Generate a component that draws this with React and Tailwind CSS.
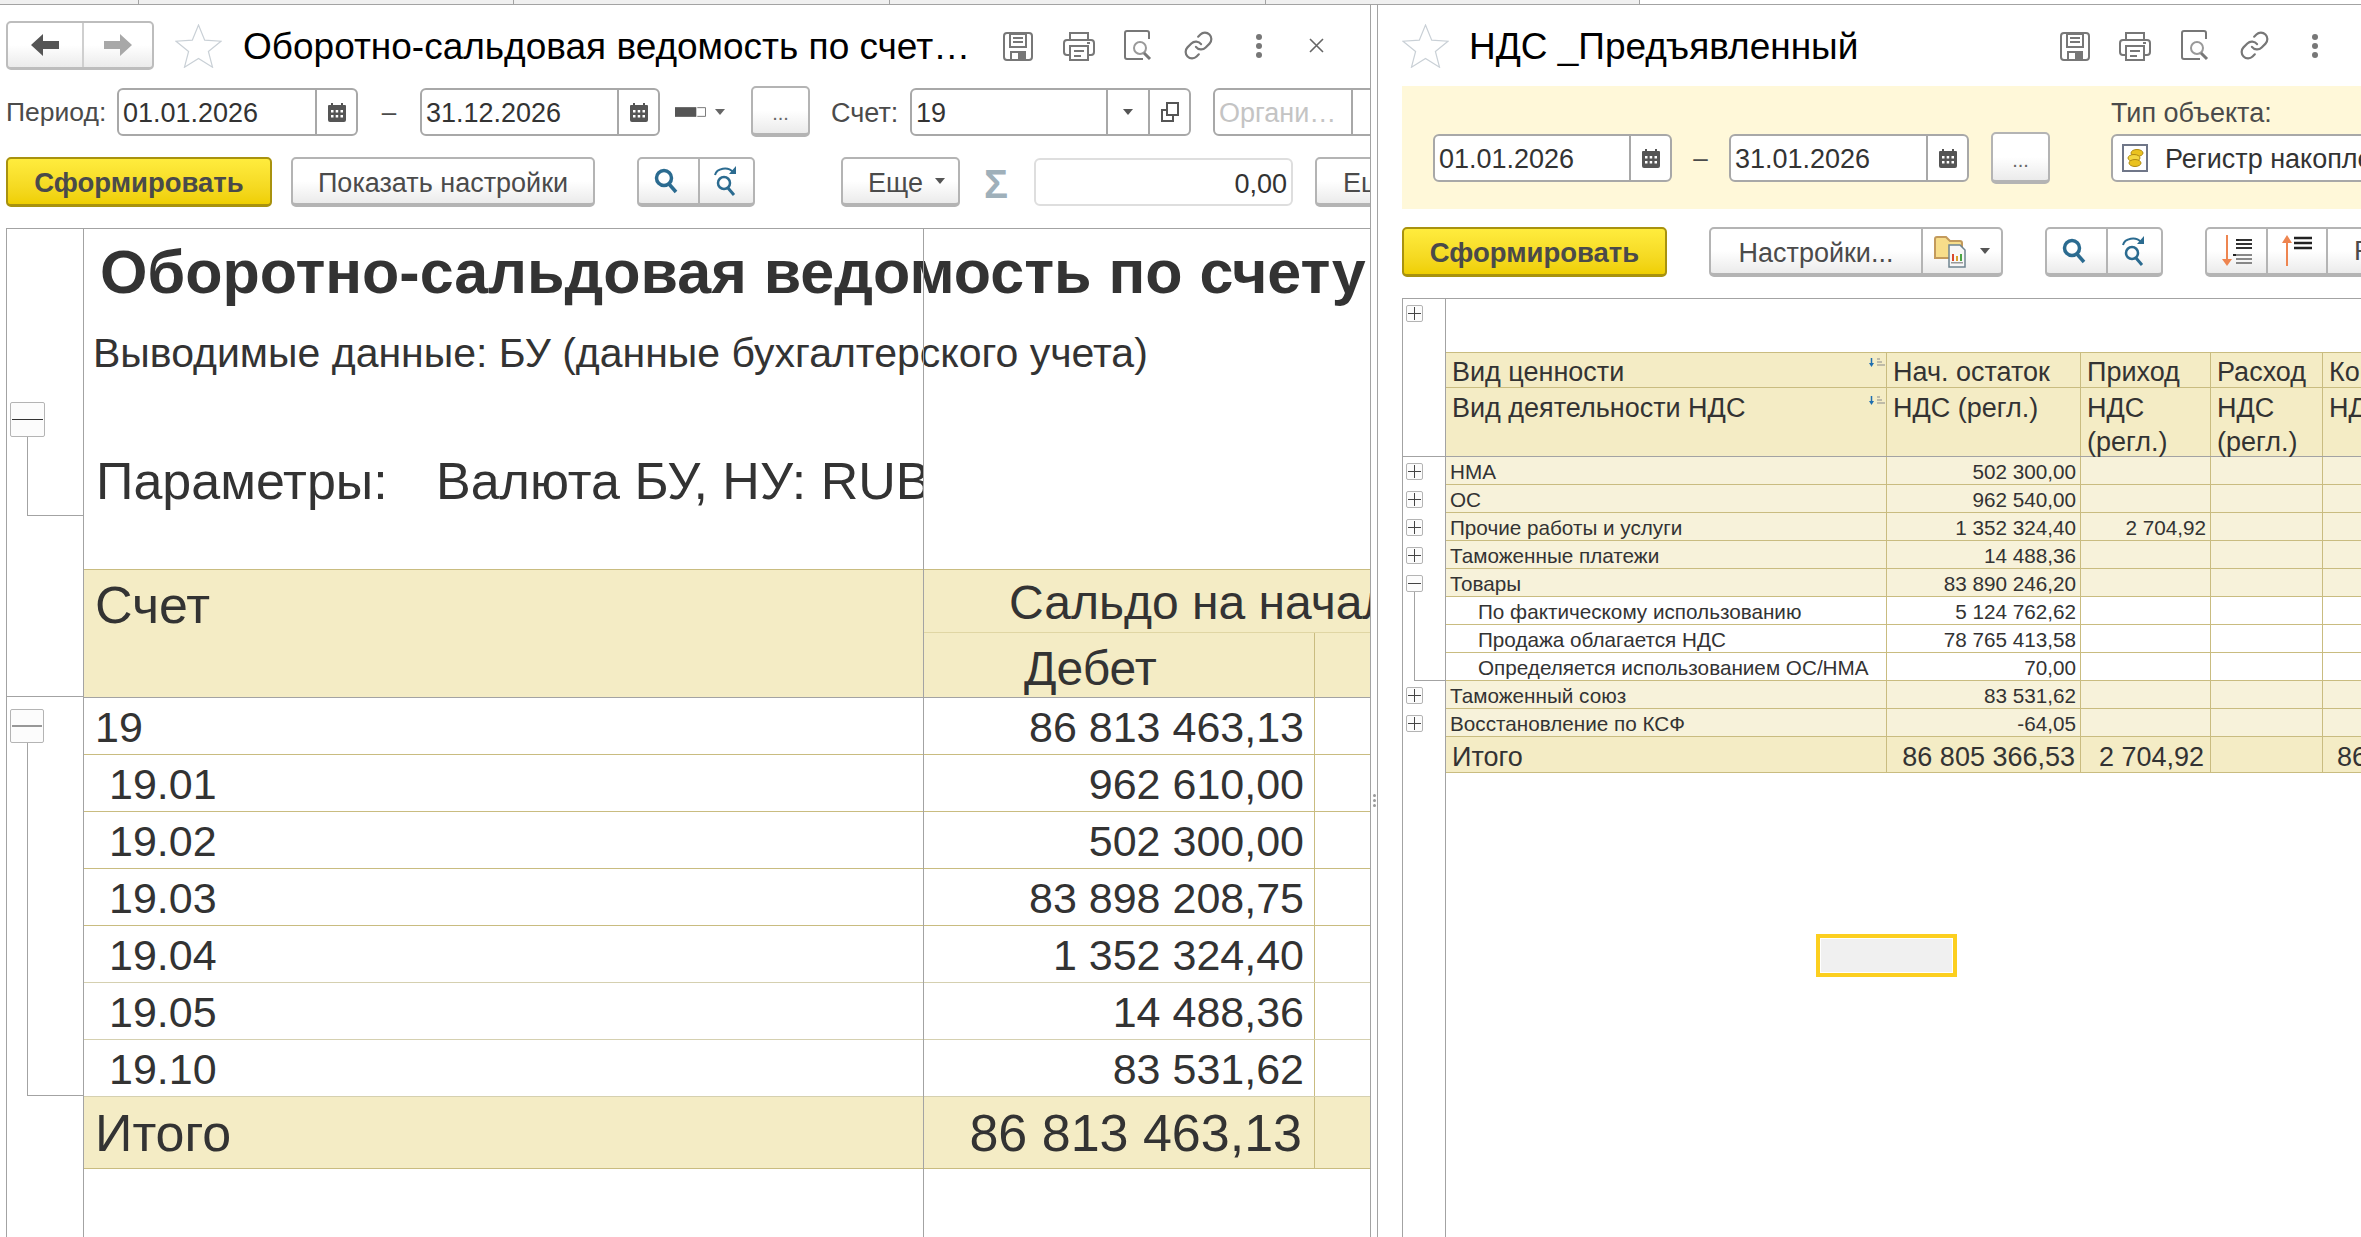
import React from 'react';
import { Link } from 'lucide-react';

const frameLine = 'border-[#a3a3a3]';
const cellLine = 'border-[#c9bc80]';

function Star() {
  return (
    <svg width="47" height="44" viewBox="0 0 47 44" fill="none">
      <path d="M23.5 1l6.2 15.2 16.3 1-12.6 10.300 4.100 15.700-14-8.700-14 8.700 4.100-15.700L1 17.200l16.300-1z" stroke="#c9d0d6" strokeWidth="1.200" />
    </svg>
  );
}

function SaveIcon() {
  return (
    <svg width="30" height="30" viewBox="0 0 30 30" fill="none" stroke="#777" strokeWidth="2">
      <rect x="1" y="2" width="28" height="27" rx="3" />
      <rect x="7" y="3" width="16" height="13" />
      <path d="M10 7h10M10 11h10" />
      <path d="M8 29v-8h14v8" />
      <rect x="15" y="22" width="7" height="7" fill="#777" stroke="none" />
    </svg>
  );
}

function PrintIcon() {
  return (
    <svg width="32" height="30" viewBox="0 0 32 30" fill="none" stroke="#777" strokeWidth="2">
      <path d="M7 9V2h18v7" />
      <path d="M7 24H4a3 3 0 0 1-3-3V12a3 3 0 0 1 3-3h24a3 3 0 0 1 3 3v9a3 3 0 0 1-3 3h-3" />
      <rect x="7" y="15" width="18" height="14" />
      <path d="M11 20h10M11 25h7M24 12h3" />
    </svg>
  );
}

function PreviewIcon() {
  return (
    <svg width="31" height="31" viewBox="0 0 31 31" fill="none" stroke="#777" strokeWidth="2">
      <path d="M20 29H4a2 2 0 0 1-2-2V3a2 2 0 0 1 2-2h20a2 2 0 0 1 2 2v6" />
      <circle cx="17" cy="18" r="6" stroke="#999" />
      <path d="M21 23l6 6" strokeWidth="3" />
    </svg>
  );
}

function DotsIcon() {
  return (
    <div className="flex flex-col gap-[3px]">
      <div className="h-[6px] w-[6px] rounded-full bg-[#777]" />
      <div className="h-[6px] w-[6px] rounded-full bg-[#777]" />
      <div className="h-[6px] w-[6px] rounded-full bg-[#777]" />
    </div>
  );
}

function CalendarIcon() {
  return (
    <svg width="20" height="20" viewBox="0 0 20 20">
      <path d="M2 3h2V1h2v2h8V1h2v2h2a1 1 0 0 1 1 1v14a2 2 0 0 1-2 2H3a2 2 0 0 1-2-2V4a1 1 0 0 1 1-1z" fill="#555" />
      <g fill="#fff">
        <rect x="4" y="8" width="2.500" height="2.500" />
        <rect x="8.700" y="8" width="2.500" height="2.500" />
        <rect x="13.500" y="8" width="2.500" height="2.500" />
        <rect x="4" y="13" width="2.500" height="2.500" />
        <rect x="8.700" y="13" width="2.500" height="2.500" />
        <rect x="13.500" y="13" width="2.500" height="2.500" />
      </g>
    </svg>
  );
}

function Caret({ color = '#555' }) {
  return (
    <svg width="10" height="6" viewBox="0 0 10 6">
      <path d="M0 0h10L5 6z" fill={color} />
    </svg>
  );
}

function SearchIcon() {
  return (
    <svg width="24" height="26" viewBox="0 0 24 26" fill="none" stroke="#2b6b90">
      <circle cx="10" cy="10" r="7.500" strokeWidth="3.500" />
      <path d="M15 16l7 8" strokeWidth="3.500" />
    </svg>
  );
}

function SearchRepeatIcon() {
  return (
    <svg width="26" height="32" viewBox="0 0 26 32" fill="none" stroke="#2b6b90">
      <path d="M2 10a10 8 0 0 1 18-3" strokeWidth="2" />
      <path d="M23 1v8h-7z" fill="#2b6b90" stroke="none" />
      <circle cx="11" cy="18" r="6" strokeWidth="2.500" />
      <path d="M15 23l6 7" strokeWidth="3" />
    </svg>
  );
}

function ArrowLeftIcon() {
  return (
    <svg width="28" height="22" viewBox="0 0 28 22">
      <path d="M0 11L12 0v7h16v8H12v7z" fill="#555" />
    </svg>
  );
}

function ArrowRightIcon() {
  return (
    <svg width="28" height="22" viewBox="0 0 28 22">
      <path d="M28 11L16 0v7H0v8h16v7z" fill="#a8a8a8" />
    </svg>
  );
}

function ColorToggleIcon() {
  return (
    <div className="flex w-[50px] items-center">
      <svg width="32" height="10" viewBox="0 0 32 10">
        <rect width="22" height="10" fill="#555" />
        <path d="M23 .5h8.500v9H23" fill="none" stroke="#777" />
      </svg>
      <span className="ml-[9px]"><Caret color="#666" /></span>
    </div>
  );
}

function CoinsIcon() {
  return (
    <svg width="26" height="28" viewBox="0 0 26 28" fill="none">
      <rect x="1" y="1" width="24" height="26" fill="#fff" stroke="#6f7688" strokeWidth="2" />
      <ellipse cx="15" cy="9" rx="6" ry="3.500" fill="#eac21f" stroke="#b08a10" />
      <ellipse cx="12" cy="14" rx="6" ry="3.500" fill="#f3d640" stroke="#b08a10" />
      <ellipse cx="13" cy="19" rx="6" ry="3.500" fill="#eac21f" stroke="#b08a10" />
    </svg>
  );
}

function FolderReportIcon() {
  return (
    <svg width="34" height="34" viewBox="0 0 34 34">
      <path d="M1 5a2 2 0 0 1 2-2h9l4 4h10a2 2 0 0 1 2 2v15H1z" fill="#f7dd8a" stroke="#c39a5c" strokeWidth="2" />
      <path d="M15 11h11l5 5v17H15z" fill="#f7f7f7" stroke="#6f8490" strokeWidth="1.500" />
      <rect x="18" y="20" width="2" height="7" fill="#d9482b" />
      <rect x="22" y="22" width="2" height="5" fill="#d9a02b" />
      <rect x="26" y="20" width="2" height="7" fill="#4aa544" />
      <rect x="17" y="28" width="12" height="1.500" fill="#999" />
    </svg>
  );
}

function SortDownIcon() {
  return (
    <svg width="30" height="32" viewBox="0 0 30 32" fill="none">
      <path d="M5 0v27" stroke="#ee8550" strokeWidth="2" />
      <path d="M0 24h10l-5 7z" fill="#ee8550" />
      <path d="M14 5h16M14 9h16M14 13h16" stroke="#333" strokeWidth="2" />
      <path d="M14 20h16M14 24h16M14 28h16" stroke="#888" strokeWidth="2" />
      <path d="M11 20h3M14 5h3" stroke="#222" strokeWidth="2" />
    </svg>
  );
}

function SortUpIcon() {
  return (
    <svg width="30" height="32" viewBox="0 0 30 32" fill="none">
      <path d="M5 31V4" stroke="#ee8550" strokeWidth="2" />
      <path d="M0 8h10L5 0z" fill="#ee8550" />
      <path d="M12 3h18M12 8h18M12 13h18" stroke="#222" strokeWidth="2.500" />
    </svg>
  );
}

function TinySort() {
  return (
    <svg width="16" height="10" viewBox="0 0 16 10" fill="none" className="mt-[5px] mr-px shrink-0">
      <path d="M2.500 0v6" stroke="#1f6fb0" strokeWidth="1.500" />
      <path d="M0 5h5l-2.500 4z" fill="#1f6fb0" />
      <path d="M8 1h3M8 4h5M8 7h8" stroke="#8a8a8a" />
    </svg>
  );
}

function ToolButton({ className = '', children }) {
  return (
    <div className={`flex h-[50px] items-center justify-center rounded-[5px] border-2 border-b-[4px] border-[#b4b4b4] bg-linear-to-b from-white from-50% to-[#ebebeb] text-[27px] text-[#4b4b4b] ${className}`}>
      {children}
    </div>
  );
}

function PrimaryButton({ className = '' }) {
  return (
    <div className={`flex h-[50px] items-center justify-center rounded-[5px] border-2 border-b-[3px] border-[#a8920e] bg-linear-to-b from-[#ffec3d] to-[#efcf00] pt-[2px] text-[27.5px] font-bold text-[#4a4a4a] ${className}`}>
      Сформировать
    </div>
  );
}

function GroupCell({ className = '', children }) {
  return <div className={`flex h-full items-center justify-center ${className}`}>{children}</div>;
}

function SearchGroup({ className = '' }) {
  return (
    <ToolButton className={`w-[118px] shrink-0 ${className}`}>
      <GroupCell className="w-[59px] pr-[5px]"><SearchIcon /></GroupCell>
      <GroupCell className="flex-1 border-l-2 border-[#b4b4b4] pr-[2px]"><SearchRepeatIcon /></GroupCell>
    </ToolButton>
  );
}

function EllipsisButton({ className = '' }) {
  return (
    <div className={`flex h-[51px] w-[59px] shrink-0 items-end justify-center rounded-[5px] border-2 border-b-[4px] border-[#b4b4b4] bg-linear-to-b from-white from-50% to-[#ebebeb] pb-[5px] text-[20px] text-[#666] ${className}`}>
      ...
    </div>
  );
}

function Field({ className = '', value, muted, children }) {
  return (
    <div className={`flex h-[48px] shrink-0 items-center rounded-[6px] border-2 border-[#a8a8a8] bg-white text-[27px] ${muted ? 'text-[#c4c4c4]' : 'text-[#333]'} ${className}`}>
      <span className="min-w-0 flex-1 truncate pt-[3px] pl-[4px]">{value}</span>
      {children}
    </div>
  );
}

function DateField({ value, className = '' }) {
  return (
    <Field value={value} className={className}>
      <div className="flex h-full w-[41px] items-center justify-center border-l-2 border-[#a8a8a8]">
        <CalendarIcon />
      </div>
    </Field>
  );
}

function TreeBox({ size, plus, stroke = '#555' }) {
  const mid = size / 2;
  return (
    <svg width={size} height={size} viewBox={`0 0 ${size} ${size}`} fill="none" className="block">
      <rect x=".5" y=".5" width={size - 1} height={size - 1} rx="1.500" fill="#fcfcfc" stroke="#b4b4b4" />
      <path d={`M2 ${mid}H${size - 2}`} stroke={stroke} />
      {plus && <path d={`M${mid} 2V${size - 2}`} stroke={stroke} />}
    </svg>
  );
}

const leftRows = [
  ['19', '86 813 463,13', false],
  ['19.01', '962 610,00', true],
  ['19.02', '502 300,00', true],
  ['19.03', '83 898 208,75', true],
  ['19.04', '1 352 324,40', true],
  ['19.05', '14 488,36', true],
  ['19.10', '83 531,62', true],
];

function LeftPanel() {
  return (
    <div className={`flex h-full w-[1371px] shrink-0 flex-col overflow-hidden border-r ${frameLine}`}>
      {/* Title bar */}
      <div className="mt-[16px] flex h-[49px] shrink-0 items-center pl-[6px]">
        <div className="flex h-[49px] w-[148px] items-center rounded-[5px] border-2 border-b-[3px] border-[#bdbdbd] bg-linear-to-b from-white from-50% to-[#ebebeb]">
          <GroupCell className="w-[74px]"><ArrowLeftIcon /></GroupCell>
          <GroupCell className="flex-1 border-l-2 border-[#cfcfcf]"><ArrowRightIcon /></GroupCell>
        </div>
        <div className="ml-[21px]"><Star /></div>
        <div className="ml-[21px] w-[760px] pt-[2px] text-[37px] whitespace-nowrap text-black">Оборотно-сальдовая ведомость по счет…</div>
        <SaveIcon />
        <div className="ml-[30px]"><PrintIcon /></div>
        <div className="ml-[28px]"><PreviewIcon /></div>
        <div className="ml-[29px]"><Link size={31} strokeWidth={1.700} color="#777" /></div>
        <div className="ml-[42px]"><DotsIcon /></div>
        <svg width="15" height="15" viewBox="0 0 15 15" className="ml-[47px]" stroke="#666" strokeWidth="1.600">
          <path d="M1 1l13 13M14 1L1 14" />
        </svg>
      </div>

      {/* Period */}
      <div className="mt-[16px] flex h-[51px] shrink-0 items-center pl-[6px] text-[#4b4b4b]">
        <div className="w-[111px] shrink-0 pt-[3px] text-[26.5px]">Период:</div>
        <DateField value="01.01.2026" className="w-[241px]" />
        <div className="w-[62px] shrink-0 pt-[2px] text-center text-[26px]">–</div>
        <DateField value="31.12.2026" className="w-[240px]" />
        <div className="ml-[15px] shrink-0"><ColorToggleIcon /></div>
        <EllipsisButton className="ml-[26px]" />
        <div className="ml-[21px] w-[79px] shrink-0 pt-[3px] text-[27px]">Счет:</div>
        <Field value="19" className="w-[281px]">
          <div className="flex h-full w-[42px] items-center justify-center border-l-2 border-[#a8a8a8]"><Caret /></div>
          <div className="flex h-full w-[41px] items-center justify-center border-l-2 border-[#a8a8a8]">
            <svg width="18" height="20" viewBox="0 0 18 20" fill="none" stroke="#555" strokeWidth="2">
              <rect x="6" y="1" width="11" height="12" />
              <path d="M6 8H1v11h11v-6" />
            </svg>
          </div>
        </Field>
        <Field value="Органи…" muted className="ml-[22px] w-[200px]">
          <div className="flex h-full w-[60px] items-center justify-center border-l-2 border-[#a8a8a8]"><Caret /></div>
        </Field>
      </div>

      {/* Commands */}
      <div className="mt-[20px] flex h-[50px] shrink-0 items-center pl-[6px]">
        <PrimaryButton className="w-[266px] shrink-0" />
        <ToolButton className="ml-[19px] w-[304px] shrink-0 pt-[4px]">Показать настройки</ToolButton>
        <SearchGroup className="ml-[42px]" />
        <ToolButton className="ml-[86px] w-[119px] shrink-0 pl-[12px]">
          <span className="pt-[4px]">Еще</span>
          <span className="ml-[12px]"><Caret /></span>
        </ToolButton>
        <div className="ml-[24px] w-[23px] shrink-0 pt-[4px] text-[40px] leading-none font-bold text-[#9fb0ba]">Σ</div>
        <div className="ml-[27px] flex h-[48px] w-[259px] shrink-0 items-center justify-end rounded-[6px] border-2 border-[#dedede] pt-[5px] pr-[4px] text-[27px] text-[#333]">0,00</div>
        <ToolButton className="ml-[22px] w-[120px] shrink-0 justify-start! pt-[4px] pl-[26px]">Еще</ToolButton>
      </div>

      {/* Report */}
      <div className={`mt-[21px] ml-[6px] flex min-h-0 flex-1 border-t border-l ${frameLine}`}>
        <div className={`w-[77px] shrink-0 border-r ${frameLine}`}>
          <div className="mt-[173px] ml-[3px]"><TreeBox size={35} stroke="#333" /></div>
          <div className={`ml-[20px] h-[79px] border-b border-l ${frameLine}`} />
          <div className={`h-[181px] border-b ${frameLine}`} />
          <div className="mt-[12px] ml-[3px]"><TreeBox size={34} stroke="#333" /></div>
          <div className={`ml-[20px] h-[353px] border-b border-l ${frameLine}`} />
        </div>

        <div className="relative min-w-0 flex-1 overflow-hidden text-[#333]">
          <div className="h-[340px] whitespace-nowrap">
            <div className="flex h-[88px] items-center pl-[16px] text-[61px] font-bold">Оборотно-сальдовая ведомость по счету</div>
            <div className="flex h-[74px] items-center pl-[9px] text-[41px]">Выводимые данные: БУ (данные бухгалтерского учета)</div>
            <div className="mt-[60px] flex h-[60px] w-[839px] items-center overflow-hidden pl-[12px] text-[52px]">
              <span className="w-[340px] shrink-0">Параметры:</span>
              <span>Валюта БУ, НУ: RUB</span>
            </div>
          </div>

          <div className={`grid h-[128px] grid-cols-[839px_392px_1fr] border-t bg-[#f4ecc5] ${cellLine}`}>
            <div className="pt-[7px] pl-[11px] text-[52px] leading-[56px]">Счет</div>
            <div className="col-span-2 flex flex-col whitespace-nowrap">
              <div className="flex h-[63px] items-center border-b border-[#e0d6a4] pt-[3px] pl-[86px] text-[48px]">Сальдо на начало периода</div>
              <div className="flex flex-1">
                <div className={`flex w-[392px] items-center border-r pl-[101px] text-[48px] ${cellLine}`}>Дебет</div>
              </div>
            </div>
          </div>

          <div className={`border-t ${frameLine}`}>
            {leftRows.map(([account, debit, nested], index) => (
              <div key={account} className={`grid h-[57px] grid-cols-[839px_392px_1fr] border-b ${index < 4 ? cellLine : 'border-[#d5d0b0]'} text-[43px] leading-none`}>
                <div className={`flex items-center pt-[3px] ${nested ? 'pl-[25px]' : 'pl-[11px]'}`}>{account}</div>
                <div className={`flex items-center justify-end border-r pt-[3px] pr-[10px] ${cellLine}`}>{debit}</div>
              </div>
            ))}
          </div>
          <div className={`grid h-[72px] grid-cols-[839px_392px_1fr] border-b bg-[#f4ecc5] text-[52px] leading-none ${cellLine}`}>
            <div className="flex items-center pl-[11px]">Итого</div>
            <div className={`flex items-center justify-end border-r pr-[12px] ${cellLine}`}>86 813 463,13</div>
          </div>

          <div className="absolute inset-y-0 left-[839px] w-px bg-[#a3a3a3]" />
        </div>
      </div>
    </div>
  );
}

const rightRows = [
  { name: 'НМА', start: '502 300,00', box: 'plus' },
  { name: 'ОС', start: '962 540,00', box: 'plus' },
  { name: 'Прочие работы и услуги', start: '1 352 324,40', income: '2 704,92', box: 'plus' },
  { name: 'Таможенные платежи', start: '14 488,36', box: 'plus' },
  { name: 'Товары', start: '83 890 246,20', box: 'minus' },
  { name: 'По фактическому использованию', start: '5 124 762,62', child: true },
  { name: 'Продажа облагается НДС', start: '78 765 413,58', child: true },
  { name: 'Определяется использованием ОС/НМА', start: '70,00', child: true, last: true },
  { name: 'Таможенный союз', start: '83 531,62', box: 'plus' },
  { name: 'Восстановление по КСФ', start: '-64,05', box: 'plus' },
];

const rightGrid = 'grid grid-cols-[43px_441px_194px_130px_112px_1fr]';

function RightGutter({ row }) {
  if (row.child) {
    return <div className={`ml-[11px] h-[28px] border-l ${frameLine} ${row.last ? 'border-b' : ''}`} />;
  }
  return (
    <div className="pt-[6px] pl-[3px]">
      <TreeBox size={17} plus={row.box === 'plus'} stroke="#444" />
      {row.box === 'minus' && <div className={`ml-[8px] h-[5px] border-l ${frameLine}`} />}
    </div>
  );
}

function RightTable() {
  const headTop = `border-t border-r border-b bg-[#f4ecc5] pl-[6px] leading-[38px] whitespace-nowrap ${cellLine}`;
  const headSub = `border-r bg-[#f4ecc5] pl-[6px] pt-[3px] ${cellLine}`;
  return (
    <div className={`mt-[21px] flex min-h-0 flex-1 flex-col overflow-hidden border-t border-l text-[#333] ${frameLine}`}>
      <div className="flex h-[53px] shrink-0">
        <div className={`w-[43px] shrink-0 border-r pt-[6px] pl-[3px] ${frameLine}`}>
          <TreeBox size={17} plus stroke="#444" />
        </div>
      </div>

      <div className={`${rightGrid} h-[36px] shrink-0 grid-rows-[36px] text-[27px]`}>
        <div className={`border-r ${frameLine}`} />
        <div className={`flex items-start justify-between ${headTop}`}>
          <span>Вид ценности</span>
          <TinySort />
        </div>
        <div className={headTop}>Нач. остаток</div>
        <div className={headTop}>Приход</div>
        <div className={headTop}>Расход</div>
        <div className={`border-t border-b bg-[#f4ecc5] pl-[6px] leading-[38px] whitespace-nowrap ${cellLine}`}>Конечный остаток</div>
      </div>
      <div className={`${rightGrid} h-[69px] shrink-0 grid-rows-[68px] border-b text-[27px] leading-[34px] ${frameLine}`}>
        <div className={`border-r ${frameLine}`} />
        <div className={`flex items-start justify-between ${headSub}`}>
          <span>Вид деятельности НДС</span>
          <TinySort />
        </div>
        <div className={headSub}>НДС (регл.)</div>
        <div className={headSub}>НДС<br />(регл.)</div>
        <div className={headSub}>НДС<br />(регл.)</div>
        <div className="bg-[#f4ecc5] pt-[3px] pl-[6px] whitespace-nowrap">НДС (регл.)</div>
      </div>

      {rightRows.map((row) => {
        const tone = row.child ? 'bg-white' : 'bg-[#f7f2da]';
        const cell = `flex items-center border-r border-b pt-[4px] ${cellLine} ${tone}`;
        return (
          <div key={row.name} className={`${rightGrid} h-[28px] shrink-0 grid-rows-[28px] text-[20.7px] leading-none`}>
            <div className={`border-r ${frameLine}`}><RightGutter row={row} /></div>
            <div className={`${cell} whitespace-nowrap ${row.child ? 'pl-[32px]' : 'pl-[4px]'}`}>{row.name}</div>
            <div className={`${cell} justify-end pr-[4px]`}>{row.start}</div>
            <div className={`${cell} justify-end pr-[4px]`}>{row.income}</div>
            <div className={cell} />
            <div className={`border-b ${cellLine} ${tone}`} />
          </div>
        );
      })}

      <div className={`${rightGrid} h-[36px] shrink-0 grid-rows-[36px] text-[27px] leading-none`}>
        <div className={`border-r ${frameLine}`} />
        <div className={`flex items-center border-r border-b bg-[#f4ecc5] pt-[6px] pl-[6px] ${cellLine}`}>Итого</div>
        <div className={`flex items-center justify-end border-r border-b bg-[#f4ecc5] pt-[6px] pr-[5px] ${cellLine}`}>86 805 366,53</div>
        <div className={`flex items-center justify-end border-r border-b bg-[#f4ecc5] pt-[6px] pr-[6px] ${cellLine}`}>2 704,92</div>
        <div className={`border-r border-b bg-[#f4ecc5] ${cellLine}`} />
        <div className={`flex items-center border-b bg-[#f4ecc5] pt-[6px] pl-[14px] whitespace-nowrap ${cellLine}`}>86 808 071,45</div>
      </div>

      <div className="flex min-h-0 flex-1">
        <div className={`w-[43px] shrink-0 border-r ${frameLine}`} />
        <div className="mt-[161px] ml-[370px] h-[43px] w-[141px] border-4 border-[#fccf1f] bg-[#f0f0f0] outline outline-white -outline-offset-[5px]" />
      </div>
    </div>
  );
}

function RightPanel() {
  return (
    <div className="flex h-full min-w-0 flex-1 flex-col overflow-hidden pl-[24px]">
      <div className="mt-[16px] flex h-[49px] shrink-0 items-center">
        <Star />
        <div className="ml-[20px] w-[591px] pt-[2px] text-[37px] whitespace-nowrap text-black">НДС _Предъявленный</div>
        <SaveIcon />
        <div className="ml-[29px]"><PrintIcon /></div>
        <div className="ml-[29px]"><PreviewIcon /></div>
        <div className="ml-[28px]"><Link size={31} strokeWidth={1.700} color="#777" /></div>
        <div className="ml-[42px]"><DotsIcon /></div>
      </div>

      <div className="mt-[16px] flex h-[123px] shrink-0 items-end bg-[#fff8d9] pb-[25px] pl-[31px] text-[#4b4b4b]">
        <div className="flex h-[52px] items-center">
          <DateField value="01.01.2026" className="w-[239px]" />
          <div className="w-[57px] shrink-0 text-center text-[26px]">–</div>
          <DateField value="31.01.2026" className="w-[240px]" />
          <EllipsisButton className="ml-[22px] h-[52px]" />
        </div>
        <div className="ml-[61px] flex flex-col">
          <div className="mb-[6px] h-[30px] text-[27px] leading-[30px]">Тип объекта:</div>
          <div className="mb-[2px] flex h-[48px] w-[400px] items-center rounded-[6px] border-2 border-[#a8a8a8] bg-white pl-[9px] text-[27px] whitespace-nowrap text-[#333]">
            <CoinsIcon />
            <span className="ml-[17px] pt-[2px]">Регистр накопления</span>
          </div>
        </div>
      </div>

      <div className="mt-[18px] flex h-[50px] shrink-0 items-center">
        <PrimaryButton className="w-[265px] shrink-0" />
        <ToolButton className="ml-[42px] w-[294px] shrink-0">
          <GroupCell className="w-[210px] pt-[4px]">Настройки...</GroupCell>
          <GroupCell className="flex-1 gap-[12px] border-l-2 border-[#b4b4b4]">
            <FolderReportIcon />
            <Caret />
          </GroupCell>
        </ToolButton>
        <SearchGroup className="ml-[42px]" />
        <ToolButton className="ml-[42px] w-[240px] shrink-0 justify-start!">
          <GroupCell className="w-[59px] shrink-0"><SortDownIcon /></GroupCell>
          <GroupCell className="w-[60px] shrink-0 border-l-2 border-[#b4b4b4]"><SortUpIcon /></GroupCell>
          <GroupCell className="flex-1 justify-start! border-l-2 border-[#b4b4b4] pl-[26px]">Р</GroupCell>
        </ToolButton>
      </div>

      <RightTable />
    </div>
  );
}

export default function App() {
  return (
    <div className="flex h-[1237px] w-[2361px] flex-col overflow-hidden bg-white font-['Liberation_Sans',sans-serif]">
      <div className={`flex h-[5px] shrink-0 border-b ${frameLine}`}>
        <div className={`w-[139px] border-r bg-[#f0f0f0] ${frameLine}`} />
        <div className={`w-[375px] border-r bg-[#f0f0f0] ${frameLine}`} />
        <div className={`w-[376px] border-r bg-[#f0f0f0] ${frameLine}`} />
        <div className={`w-[376px] border-r bg-[#f0f0f0] ${frameLine}`} />
        <div className={`w-[374px] border-r bg-[#f0f0f0] ${frameLine}`} />
      </div>
      <div className="flex min-h-0 flex-1">
        <LeftPanel />
        <div className={`flex w-[7px] shrink-0 flex-col items-center gap-[2px] border-r pt-[789px] ${frameLine}`}>
          <div className="h-[3px] w-[3px] rounded-full bg-[#9a9a9a]" />
          <div className="h-[3px] w-[3px] rounded-full bg-[#9a9a9a]" />
          <div className="h-[3px] w-[3px] rounded-full bg-[#9a9a9a]" />
        </div>
        <RightPanel />
      </div>
    </div>
  );
}
